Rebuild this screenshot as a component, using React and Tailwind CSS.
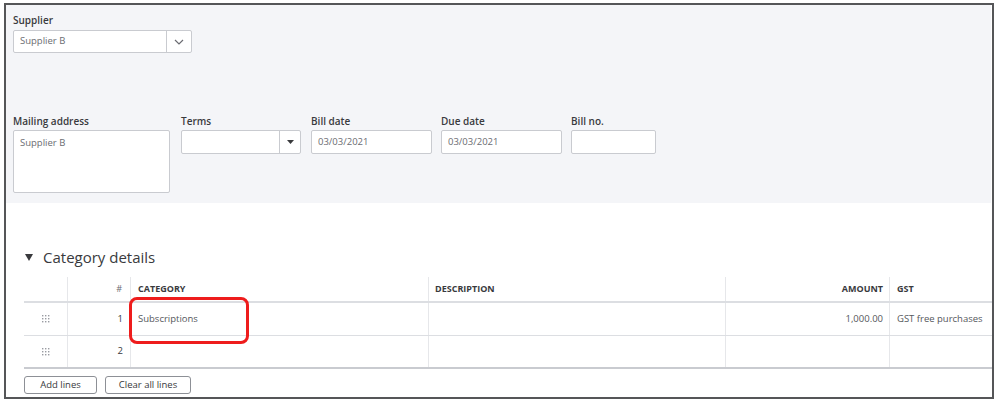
import React from 'react';

const FONT = { fontFamily: '"Open Sans", "Liberation Sans", sans-serif' };

const Field = ({ label, value, width, dropdown }) => (
  <div className="flex flex-col">
    <label className="h-[16px] text-[10px] leading-[16px] font-semibold text-[#393a3d]">{label}</label>
    <div className="mt-px flex h-[24px] bg-white border border-[#c9cbd0] rounded-[2px]" style={{ width }}>
      <div className="flex-1 flex items-center px-[6px] text-[9.5px] text-[#6b6c72]">{value}</div>
      {dropdown && (
        <div className="w-[21px] border-l border-[#c9cbd0] flex items-center justify-center">
          <svg width="7" height="4" viewBox="0 0 7 4"><path d="M0 0h7L3.5 4z" fill="#393a3d" /></svg>
        </div>
      )}
    </div>
  </div>
);

const DragHandle = () => (
  <svg width="8" height="8" viewBox="0 0 8 8" fill="#9a9ca2">
    {[0, 3, 6].map((y) => [0, 3, 6].map((x) => <rect key={`${x}-${y}`} x={x} y={y} width="1.4" height="1.4" />))}
  </svg>
);

const COLS = 'grid grid-cols-[43px_63px_298px_297px_164px_1fr]';

const rows = [
  { n: 1, category: 'Subscriptions', amount: '1,000.00', gst: 'GST free purchases' },
  { n: 2, category: '', amount: '', gst: '' },
];

export default function App() {
  return (
    <div className="w-[998px] h-[403px] bg-white pl-[4px] pt-[3px]" style={FONT}>
      <div className="w-[990px] h-[396px] border-2 border-[#555658] flex flex-col">
        {/* header form */}
        <div className="h-[198px] mr-px bg-[#f4f5f8] pl-[7px] pt-[7px]">
          <label className="block h-[16px] text-[10px] leading-[16px] font-semibold text-[#393a3d]">Supplier</label>
          <div className="mt-[2px] flex w-[179px] h-[23px] bg-white border border-[#c9cbd0] rounded-[2px]">
            <div className="flex-1 flex items-center px-[6px] text-[9.5px] text-[#6b6c72]">Supplier B</div>
            <div className="w-[25px] border-l border-[#c9cbd0] flex items-center justify-center">
              <svg width="10" height="6" viewBox="0 0 10 6" fill="none" stroke="#6b6c72" strokeWidth="1.2">
                <path d="M1 1l4 4 4-4" />
              </svg>
            </div>
          </div>

          <div className="mt-[60px] flex gap-[11px]">
            <div className="flex flex-col">
              <label className="h-[16px] text-[10px] leading-[16px] font-semibold text-[#393a3d]">Mailing address</label>
              <div className="mt-px w-[157px] h-[63px] bg-white border border-[#c9cbd0] rounded-[2px] px-[6px] pt-[5px] text-[9.5px] text-[#6b6c72]">
                Supplier B
              </div>
            </div>
            <Field label="Terms" value="" width={120} dropdown />
            <div className="ml-[-1px]">
              <Field label="Bill date" value="03/03/2021" width={121} />
            </div>
            <div className="ml-[-2px]">
              <Field label="Due date" value="03/03/2021" width={121} />
            </div>
            <div className="ml-[-2px]">
              <Field label="Bill no." value="" width={85} />
            </div>
          </div>
        </div>

        {/* category details */}
        <div className="flex-1 pl-[18px] pt-[44px]">
          <div className="flex items-center h-[20px] mb-[10px]">
            <svg width="8" height="7" viewBox="0 0 8 7" className="ml-px mr-[10px]"><path d="M0 0h8L4 7z" fill="#393a3d" /></svg>
            <span className="text-[15px] text-[#393a3d]">Category details</span>
          </div>

          <div className="relative">
            <div className={`${COLS} h-[26px] border-b-2 border-[#dcdee2] text-[9px] font-bold text-[#393a3d]`}>
              <div />
              <div className="border-l border-[#e6e7ea] flex items-center justify-end pr-[8px] font-normal text-[#6b6c72]">#</div>
              <div className="border-l border-[#e6e7ea] flex items-center pl-[7px]">CATEGORY</div>
              <div className="border-l border-[#e6e7ea] flex items-center pl-[6px]">DESCRIPTION</div>
              <div className="border-l border-[#e6e7ea] flex items-center justify-end pr-[6px]">AMOUNT</div>
              <div className="border-l border-[#e6e7ea] flex items-center pl-[7px]">GST</div>
            </div>
            {rows.map((r, i) => (
              <div
                key={r.n}
                className={`${COLS} h-[33px] text-[9.5px] text-[#55575c] ${i === rows.length - 1 ? 'border-b-2 border-[#c9cbd0]' : 'border-b border-[#dcdee2]'}`}
              >
                <div className="flex items-center justify-center"><DragHandle /></div>
                <div className="border-l border-[#e6e7ea] flex items-center justify-end pr-[7px] text-[#393a3d]">{r.n}</div>
                <div className="border-l border-[#e6e7ea] flex items-center pl-[7px]">{r.category}</div>
                <div className="border-l border-[#e6e7ea]" />
                <div className="border-l border-[#e6e7ea] flex items-center justify-end pr-[6px]">{r.amount}</div>
                <div className="border-l border-[#e6e7ea] flex items-center pl-[7px]">{r.gst}</div>
              </div>
            ))}

            {/* annotation */}
            <div className="absolute left-[105px] top-[20px] w-[120px] h-[47px] border-[3px] border-[#ee1c1c] rounded-[8px]" />
          </div>

          <div className="mt-[7px] flex gap-[8px]">
            <button className="w-[73px] h-[18px] border border-[#8d9096] rounded-[3px] text-[9.5px] text-[#393a3d] bg-white">Add lines</button>
            <button className="w-[86px] h-[18px] border border-[#8d9096] rounded-[3px] text-[9.5px] text-[#393a3d] bg-white">Clear all lines</button>
          </div>
        </div>
      </div>
    </div>
  );
}
